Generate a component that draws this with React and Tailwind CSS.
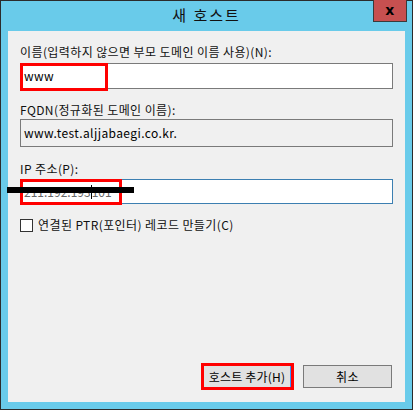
import React from "react";

const font = { fontFamily: '"Noto Sans CJK KR", "Noto Sans", sans-serif' };

export default function App() {
  return (
    <div
      style={font}
      className="w-[413px] h-[410px] bg-[#69cbea] border border-[#2b2b2b] flex flex-col text-[12px] tracking-[0.4px] text-black"
    >
      {/* title bar */}
      <div className="relative h-[30px] shrink-0 flex items-center justify-center">
        <span className="text-[15px] leading-none tracking-[2px] text-[#111] -mt-[3px]">새 호스트</span>
        <div className="absolute right-[5px] -top-[1px] w-[34px] h-[22px] bg-[#c75050] border border-[#3a3a3a] border-t-0 flex items-center justify-center">
          <span className="text-[14px] font-bold leading-none -mt-[2px]" style={{ fontFamily: '"DejaVu Sans", sans-serif' }}>x</span>
        </div>
      </div>

      {/* content */}
      <div className="mx-[7px] mb-[7px] flex-1 bg-[#f0f0f0] px-[12px] pt-[13px] flex flex-col">
        <div className="h-[16px] leading-[16px] text-[#111]">이름(입력하지 않으면 부모 도메인 이름 사용)(N):</div>
        <div className="relative mt-[3px] h-[26px] bg-white border border-[#7a7a7a] flex items-center pl-[3px]">
          <span className="leading-none">www</span>
          <div className="absolute -left-[1px] -top-[1px] w-[88px] h-[28px] border-[3px] border-[#ff0000]" />
        </div>

        <div className="mt-[13px] h-[16px] leading-[16px] text-[#111]">FQDN(정규화된 도메인 이름):</div>
        <div className="mt-[1px] h-[28px] bg-[#f0f0f0] border border-[#7a7a7a] flex items-center pl-[3px]">
          <span className="leading-none">www.test.aljjabaegi.co.kr.</span>
        </div>

        <div className="mt-[14px] h-[16px] leading-[16px] text-[#111]">IP 주소(P):</div>
        <div className="relative mt-[2px] h-[25px] bg-white border border-[#3c7fb1] flex items-center pl-[3px] tracking-normal">
          <span className="leading-none text-[#666]">211.192.193</span>
          <span className="w-px h-[14px] bg-black" />
          <span className="leading-none text-[#666]">101</span>
          <div className="absolute -left-[1px] -top-[1px] w-[102px] h-[26px] border-[3px] border-[#ff0000]" />
          <div className="absolute -left-[14px] top-[7px] w-[127px] h-[6px] bg-black" />
        </div>

        <div className="mt-[13px] flex items-center gap-[5px]">
          <div className="w-[13px] h-[13px] bg-white border border-[#333]" />
          <span className="leading-[16px] text-[#111]">연결된 PTR(포인터) 레코드 만들기(C)</span>
        </div>

        <div className="mt-auto mb-[12px] flex justify-end items-center gap-[9px] pr-[1px]">
          <div className="border-[3px] border-[#ff0000] w-[93px] h-[27px] flex">
            <div className="flex-1 bg-[#e1e1e1] border-r border-[#3399ff] flex items-center justify-center">
              <span className="leading-none tracking-[0.2px]">호스트 추가(H)</span>
            </div>
          </div>
          <div className="w-[89px] h-[23px] bg-[#e1e1e1] border border-[#7a7a7a] flex items-center justify-center">
            <span className="leading-none">취소</span>
          </div>
        </div>
      </div>
    </div>
  );
}
